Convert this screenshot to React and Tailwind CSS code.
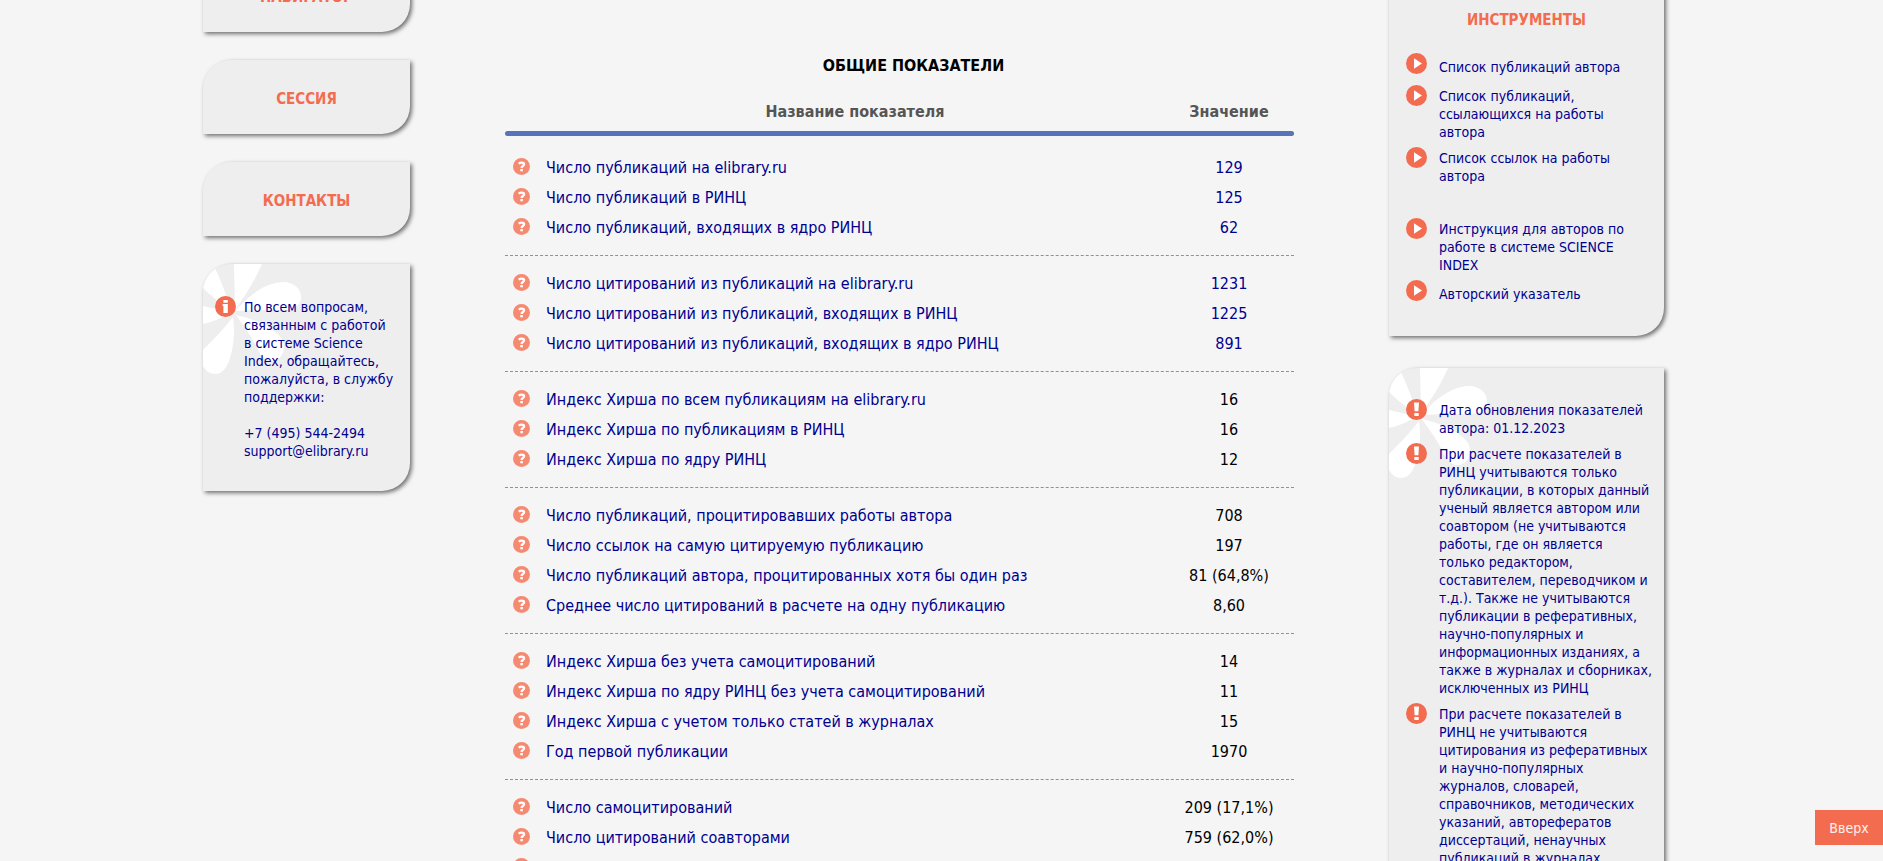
const navCards = ['НАВИГАТОР', 'СЕССИЯ', 'КОНТАКТЫ']

const groups = [
  [
    { name: 'Число публикаций на elibrary.ru', value: '129', link: true },
    { name: 'Число публикаций в РИНЦ', value: '125', link: true },
    { name: 'Число публикаций, входящих в ядро РИНЦ', value: '62', link: true },
  ],
  [
    { name: 'Число цитирований из публикаций на elibrary.ru', value: '1231', link: true },
    { name: 'Число цитирований из публикаций, входящих в РИНЦ', value: '1225', link: true },
    { name: 'Число цитирований из публикаций, входящих в ядро РИНЦ', value: '891', link: true },
  ],
  [
    { name: 'Индекс Хирша по всем публикациям на elibrary.ru', value: '16' },
    { name: 'Индекс Хирша по публикациям в РИНЦ', value: '16' },
    { name: 'Индекс Хирша по ядру РИНЦ', value: '12' },
  ],
  [
    { name: 'Число публикаций, процитировавших работы автора', value: '708' },
    { name: 'Число ссылок на самую цитируемую публикацию', value: '197' },
    { name: 'Число публикаций автора, процитированных хотя бы один раз', value: '81 (64,8%)' },
    { name: 'Среднее число цитирований в расчете на одну публикацию', value: '8,60' },
  ],
  [
    { name: 'Индекс Хирша без учета самоцитирований', value: '14' },
    { name: 'Индекс Хирша по ядру РИНЦ без учета самоцитирований', value: '11' },
    { name: 'Индекс Хирша с учетом только статей в журналах', value: '15' },
    { name: 'Год первой публикации', value: '1970' },
  ],
  [
    { name: 'Число самоцитирований', value: '209 (17,1%)' },
    { name: 'Число цитирований соавторами', value: '759 (62,0%)' },
    { name: '', value: '' },
  ],
]

const authorTools = [
  'Список публикаций автора',
  'Список публикаций,\nссылающихся на работы\nавтора',
  'Список ссылок на работы\nавтора',
]

const helpTools = [
  'Инструкция для авторов по\nработе в системе SCIENCE\nINDEX',
  'Авторский указатель',
]

const notes = [
  'Дата обновления показателей\nавтора: 01.12.2023',
  'При расчете показателей в\nРИНЦ учитываются только\nпубликации, в которых данный\nученый является автором или\nсоавтором (не учитываются\nработы, где он является\nтолько редактором,\nсоставителем, переводчиком и\nт.д.). Также не учитываются\nпубликации в реферативных,\nнаучно-популярных и\nинформационных изданиях, а\nтакже в журналах и сборниках,\nисключенных из РИНЦ',
  'При расчете показателей в\nРИНЦ не учитываются\nцитирования из реферативных\nи научно-популярных\nжурналов, словарей,\nсправочников, методических\nуказаний, авторефератов\nдиссертаций, ненаучных\nпубликаций в журналах',
]

function PlayIcon() {
  return (
    <svg viewBox="0 0 21 21" className="-mt-0.5 h-[21px] w-[21px] shrink-0" aria-hidden="true">
      <circle cx="10.5" cy="10.5" r="10.5" fill="#f36c4f" />
      <path d="M8 5.2v10.6l8-5.3z" fill="#fff" />
    </svg>
  )
}

function InfoIcon() {
  return (
    <svg viewBox="0 0 21 21" className="-mt-0.5 h-[21px] w-[21px] shrink-0" aria-hidden="true">
      <circle cx="10.5" cy="10.5" r="10.5" fill="#f36c4f" />
      <path d="M8.4 4h4.4v2.8H8.4zM7.6 8h5.2v9H8.4v-7h-.8z" fill="#fff" />
    </svg>
  )
}

function AlertIcon() {
  return (
    <svg viewBox="0 0 21 21" className="-mt-0.5 h-[21px] w-[21px] shrink-0" aria-hidden="true">
      <circle cx="10.5" cy="10.5" r="10.5" fill="#f36c4f" />
      <path d="M8 3.4h5l-.6 8.8H8.6zM8.3 14h4.4v3H8.3z" fill="#fff" />
    </svg>
  )
}

function QuestionIcon() {
  return (
    <svg viewBox="0 0 17 17" className="h-[17px] w-[17px]" aria-hidden="true">
      <circle cx="8.5" cy="8.5" r="8.5" fill="#f58a72" />
      <path
        d="M5.7 5.6C6.8 4.8 7.8 4.6 8.7 4.6c1.5 0 2.4.6 2.4 1.7 0 1.7-2.5 1.6-2.5 3.6"
        fill="none"
        stroke="#fff"
        strokeWidth="2.3"
      />
      <rect x="7.3" y="11" width="2.6" height="2.3" fill="#fff" />
    </svg>
  )
}

/* White petals in the corner of a card */
function Flower() {
  return (
    <svg
      viewBox="0 0 100 112"
      className="absolute top-0 left-0 h-[112px] w-[100px] overflow-hidden rounded-tl-[28px]"
      aria-hidden="true"
    >
      <g fill="#fff">
        <path d="M32 46 31 0h28C52 16 42 32 32 46z" />
        <path d="M32 47C45 33 60 19 80 18c12 0 19 8 18 17-1 8-9 11-20 11-16 0-31 0-46 1z" />
        <path d="M33 51c18 4 38 12 46 24 5 9 0 22-10 22-9 0-12-7-17-17-6-11-13-20-19-29z" />
        <path d="M30 53c2 14 1 28-3 41-3 10-8 16-15 16-5 0-9-3-12-8V86c10-10 21-21 30-33z" />
        <path d="M28 49C18 54 9 58 0 60V42c9 2 18 4 28 7z" />
        <path d="M28 46C18 40 8 32 0 24V0h10c7 14 13 30 18 46z" />
      </g>
    </svg>
  )
}

function Card({ className, children }) {
  return (
    <section
      className={`relative bg-[#eee] rounded-tl-[28px] rounded-br-[28px] shadow-[2px_2px_4px_rgba(0,0,0,0.55)] ${className}`}
    >
      {children}
    </section>
  )
}

function ToolList({ items }) {
  return (
    <ul className="flex flex-col gap-2">
      {items.map((item) => (
        <li key={item} className="flex min-h-6 items-start gap-3">
          <PlayIcon />
          <a href="#" className="self-center whitespace-pre">{item}</a>
        </li>
      ))}
    </ul>
  )
}

function Indicators() {
  return (
    <table className="w-full border-collapse">
      <thead className="text-[#555]">
        <tr className="h-10">
          <th className="w-[41px] p-0" />
          <th className="p-0 pt-0.5">Название показателя</th>
          <th className="w-[130px] p-0 pt-0.5">Значение</th>
        </tr>
        <tr>
          <td colSpan={3} className="p-0 pb-[17px]">
            <div className="h-[5px] rounded-full bg-[#5873b9]" />
          </td>
        </tr>
      </thead>
      {groups.map((rows, i) => (
        <tbody key={i}>
          {i > 0 && (
            <tr>
              <td colSpan={3} className="p-0 pt-3 pb-[13px]">
                <div className="border-t border-dashed border-[#f36c4f]" />
              </td>
            </tr>
          )}
          {rows.map((row) => (
            <tr key={row.name} className="h-[30px]">
              <td className="p-0 pb-1 pl-2 align-middle">
                <button type="button" aria-label="Пояснение" className="block">
                  <QuestionIcon />
                </button>
              </td>
              <td className="p-0 text-[#00008f]">{row.name}</td>
              <td className="p-0 text-center">
                {row.link ? <a href="#" className="text-[#00008f]">{row.value}</a> : row.value}
              </td>
            </tr>
          ))}
        </tbody>
      ))}
    </table>
  )
}

export default function App() {
  return (
    <div className="h-screen overflow-hidden bg-[#f5f5f5] pr-4 font-['DejaVu_Sans_Condensed','DejaVu_Sans',sans-serif] text-base text-black">
      <div className="mx-auto flex max-w-[1461px] items-start">
        {/* Left column */}
        <aside className="-mt-[42px] flex w-[207px] shrink-0 flex-col gap-7 text-sm leading-[18px] text-[#00008f]">
          {navCards.map((title) => (
            <Card key={title} className="h-[74px]">
              <button type="button" className="h-full w-full pt-1 text-[15px] font-bold text-[#f36c4f]">
                {title}
              </button>
            </Card>
          ))}
          <Card className="pt-[34px] pb-[31px]">
            <Flower />
            <div className="relative flex gap-2 pl-3">
              <InfoIcon />
              <div>
                <p className="whitespace-pre">
                  {'По всем вопросам,\nсвязанным с работой\nв системе Science\nIndex, обращайтесь,\nпожалуйста, в службу\nподдержки:'}
                </p>
                <p className="mt-[18px]">+7 (495) 544-2494</p>
                <a href="mailto:support@elibrary.ru" className="block">support@elibrary.ru</a>
              </div>
            </div>
          </Card>
        </aside>

        {/* Indicators table */}
        <main className="mx-[95px] min-w-0 flex-1 pt-[54px]">
          <h1 className="mb-[13px] pl-7 text-center font-bold">ОБЩИЕ ПОКАЗАТЕЛИ</h1>
          <Indicators />
        </main>

        {/* Right column */}
        <aside className="-mt-10 flex w-[275px] shrink-0 flex-col gap-8 text-sm leading-[18px] text-[#00008f]">
          <Card className="px-[17px] pt-[51px] pb-[30px]">
            <h2 className="mb-[26px] text-center text-[15px] font-bold text-[#f36c4f]">ИНСТРУМЕНТЫ</h2>
            <div className="flex flex-col gap-[35px]">
              <ToolList items={authorTools} />
              <ToolList items={helpTools} />
            </div>
          </Card>
          <Card className="pt-[33px] pb-[31px]">
            <Flower />
            <ul className="relative flex flex-col gap-2 pl-[17px]">
              {notes.map((note) => (
                <li key={note} className="flex gap-3">
                  <AlertIcon />
                  <p className="whitespace-pre">{note}</p>
                </li>
              ))}
            </ul>
          </Card>
        </aside>
      </div>

      <button
        type="button"
        className="fixed right-0 bottom-4 h-[35px] w-[68px] bg-[#f36c4f] text-sm text-white/90"
      >
        Вверх
      </button>
    </div>
  )
}
